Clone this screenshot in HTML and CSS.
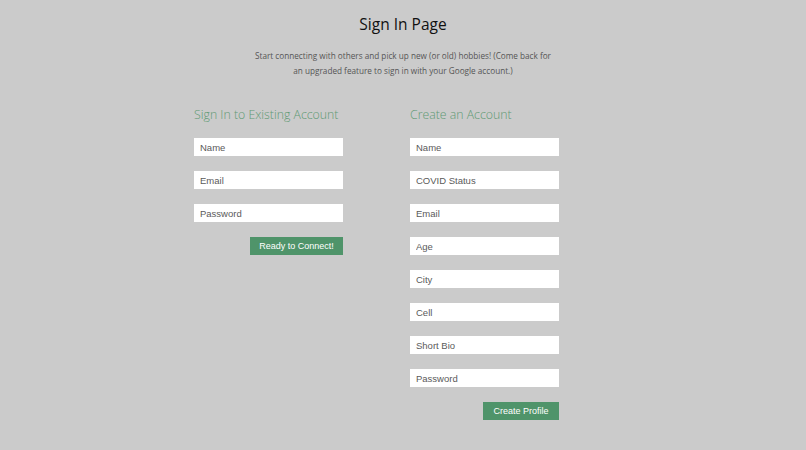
FILE: index.html
```html
<!DOCTYPE html>
<html lang="en">
<head>
  <meta charset="UTF-8">
  <title>Sign In Page</title>
  <link rel="stylesheet" href="styles.css">
</head>
<body>
  <header class="intro">
    <h1>Sign In Page</h1>
    <p>Start connecting with others and pick up new (or old) hobbies! (Come back for an upgraded feature to sign in with your Google account.)</p>
  </header>

  <main class="forms">
    <form class="form-col">
      <h2>Sign In to Existing Account</h2>
      <input type="text" placeholder="Name">
      <input type="email" placeholder="Email">
      <input type="password" placeholder="Password">
      <button type="button" class="btn connect">Ready to Connect!</button>
    </form>

    <form class="form-col">
      <h2>Create an Account</h2>
      <input type="text" placeholder="Name">
      <input type="text" placeholder="COVID Status">
      <input type="email" placeholder="Email">
      <input type="text" placeholder="Age">
      <input type="text" placeholder="City">
      <input type="text" placeholder="Cell">
      <input type="text" placeholder="Short Bio">
      <input type="password" placeholder="Password">
      <button type="button" class="btn create">Create Profile</button>
    </form>
  </main>
</body>
</html>
```

FILE: styles.css
```css
body {
  margin: 0;
  background: #cbcbcb;
  font-family: 'Open Sans', sans-serif;
  color: #111;
}
.intro {
  text-align: center;
  padding-top: 12px;
}
.intro h1 {
  margin: 0;
  font-size: 15.5px;
  font-weight: 400;
  line-height: 24px;
}
.intro p {
  width: 304px;
  margin: 12px auto 0;
  font-size: 8.2px;
  line-height: 15px;
  color: #555;
}
.forms {
  display: flex;
  gap: 67px;
  padding-left: 194px;
  margin-top: 27px;
}
.form-col {
  display: flex;
  flex-direction: column;
  width: 149px;
}
.form-col h2 {
  margin: 0 0 13px;
  font-size: 12.3px;
  font-weight: 300;
  line-height: 20px;
  color: #5f9a74; /* soft green for section titles */
  white-space: nowrap;
}
.form-col input {
  box-sizing: border-box;
  height: 18px;
  margin: 0 0 15px;
  padding: 0 6px;
  border: none;
  background: #fff;
  font-family: 'Liberation Sans', Arial, sans-serif;
  font-size: 9.5px;
}
.form-col input::placeholder {
  color: #5a5a5a;
}
.btn {
  align-self: flex-end;
  height: 18px;
  border: none;
  background: #4f946a;
  color: #fff;
  font-family: 'Liberation Sans', Arial, sans-serif;
  font-size: 9px;
}
.connect {
  width: 93px;
}
.create {
  width: 76px;
}
```
